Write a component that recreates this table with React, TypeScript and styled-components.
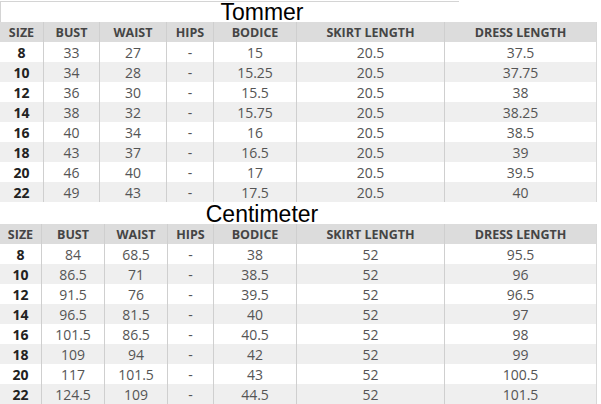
import React from "react";
import styled, { createGlobalStyle } from "styled-components";

const Global = createGlobalStyle`
  html, body { margin: 0; padding: 0; background: #fff; }
  body { font-family: "Open Sans", "Liberation Sans", sans-serif; }
`;

const Page = styled.div`
  width: 597px;
  display: flex;
  flex-direction: column;
`;

const TitleRow = styled.div<{ $framed?: boolean }>`
  position: relative;
  width: 524px;
  height: 22px;
  display: flex;
  align-items: center;
  justify-content: center;
  font-family: "Liberation Sans", Arial, sans-serif;
  font-size: 23px;
  line-height: 22px;
  color: #000;
  padding-top: 2px;
  box-sizing: border-box;
  &::before {
    content: "";
    display: ${(p) => (p.$framed ? "block" : "none")};
    position: absolute;
    top: 1px;
    left: 0;
    width: 459px;
    height: 21px;
    border-top: 1px solid #d4d4d4;
    border-left: 1px solid #d4d4d4;
    box-sizing: border-box;
  }
`;

const Grid = styled.div<{ $cols: string }>`
  display: grid;
  grid-template-columns: ${(p) => p.$cols};
  border-right: 1px solid #d8d8d8;
`;

const HeadCell = styled.div`
  height: 20px;
  background: #dcdcdc;
  color: #454545;
  font-weight: 700;
  font-size: 12.5px;
  display: flex;
  align-items: center;
  justify-content: center;
  border-left: 1px solid #cfcfcf;
  box-sizing: border-box;
  &:first-child { border-left: none; }
`;

const Cell = styled.div<{ $alt: boolean; $first: boolean }>`
  height: 20px;
  background: ${(p) => (p.$alt ? "#efefef" : "#ffffff")};
  color: ${(p) => (p.$first ? "#222" : "#555")};
  font-weight: ${(p) => (p.$first ? 700 : 400)};
  font-size: 14px;
  display: flex;
  align-items: center;
  justify-content: center;
  border-left: ${(p) => (p.$first ? "none" : "1px solid #cfcfcf")};
  box-sizing: border-box;
`;

const headers = ["SIZE", "BUST", "WAIST", "HIPS", "BODICE", "SKIRT LENGTH", "DRESS LENGTH"];

const inches = [
  ["8", "33", "27", "-", "15", "20.5", "37.5"],
  ["10", "34", "28", "-", "15.25", "20.5", "37.75"],
  ["12", "36", "30", "-", "15.5", "20.5", "38"],
  ["14", "38", "32", "-", "15.75", "20.5", "38.25"],
  ["16", "40", "34", "-", "16", "20.5", "38.5"],
  ["18", "43", "37", "-", "16.5", "20.5", "39"],
  ["20", "46", "40", "-", "17", "20.5", "39.5"],
  ["22", "49", "43", "-", "17.5", "20.5", "40"],
];

const cms = [
  ["8", "84", "68.5", "-", "38", "52", "95.5"],
  ["10", "86.5", "71", "-", "38.5", "52", "96"],
  ["12", "91.5", "76", "-", "39.5", "52", "96.5"],
  ["14", "96.5", "81.5", "-", "40", "52", "97"],
  ["16", "101.5", "86.5", "-", "40.5", "52", "98"],
  ["18", "109", "94", "-", "42", "52", "99"],
  ["20", "117", "101.5", "-", "43", "52", "100.5"],
  ["22", "124.5", "109", "-", "44.5", "52", "101.5"],
];

function SizeTable({ cols, rows }: { cols: string; rows: string[][] }) {
  return (
    <Grid $cols={cols}>
      {headers.map((h) => (
        <HeadCell key={h}>{h}</HeadCell>
      ))}
      {rows.map((r, ri) =>
        r.map((v, ci) => (
          <Cell key={`${ri}-${ci}`} $alt={ri % 2 === 1} $first={ci === 0}>
            {v}
          </Cell>
        ))
      )}
    </Grid>
  );
}

export default function App() {
  return (
    <>
      <Global />
      <Page>
        <TitleRow $framed>Tommer</TitleRow>
        <SizeTable cols="43px 56px 67px 47px 83px 148px 1fr" rows={inches} />
        <TitleRow>Centimeter</TitleRow>
        <SizeTable cols="41px 63px 63px 46px 83px 148px 1fr" rows={cms} />
      </Page>
    </>
  );
}
